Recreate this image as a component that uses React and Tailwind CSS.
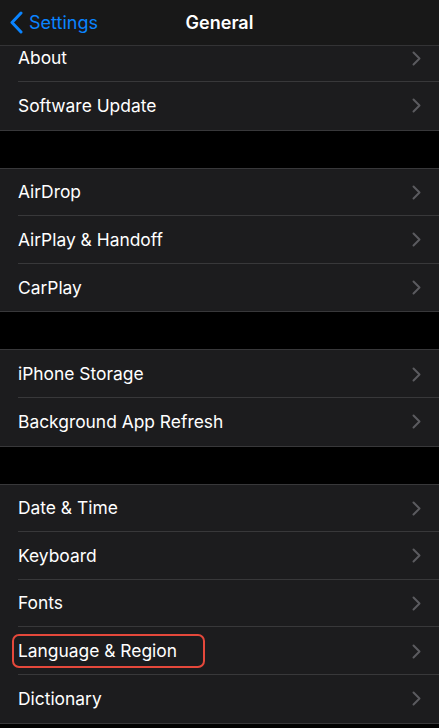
import React from 'react';

const GROUPS = [
  ['About', 'Software Update'],
  ['AirDrop', 'AirPlay & Handoff', 'CarPlay'],
  ['iPhone Storage', 'Background App Refresh'],
  ['Date & Time', 'Keyboard', 'Fonts', 'Language & Region', 'Dictionary'],
];

const Chevron = () => (
  <svg width="9" height="15" viewBox="0 0 9 15" fill="none">
    <path d="M1.5 1.5 L7.5 7.5 L1.5 13.5" stroke="#5b5b5f" strokeWidth="2" strokeLinecap="round" strokeLinejoin="round" />
  </svg>
);

const Row = ({ label, last, highlight }) => (
  <div className="relative h-[47.6px] flex items-center pl-[18px]">
    <span className="flex-1 text-[17.4px] text-white">{label}</span>
    <span className="pr-[18px] flex items-center"><Chevron /></span>
    {!last && <div className="absolute bottom-0 left-[18px] right-0 h-px bg-[#38383a]" />}
    {highlight && (
      <div className="absolute left-[12px] top-[7px] w-[193px] h-[34px] rounded-[7px] border-2 border-[#e5483b]" />
    )}
  </div>
);

const Group = ({ items, first }) => (
  <div className={`bg-[#1c1c1e] border-b border-[#38383a] ${first ? '' : 'border-t'} overflow-hidden`}>
    <div className={first ? '-mt-[11.6px]' : ''}>
      {items.map((label, i) => (
        <Row key={label} label={label} last={i === items.length - 1} highlight={label === 'Language & Region'} />
      ))}
    </div>
  </div>
);

export default function App() {
  return (
    <div className="w-[439px] h-[728px] bg-black overflow-hidden" style={{ fontFamily: 'Inter, "Noto Sans", sans-serif' }}>
      <div className="h-[46px] bg-[#181818] border-b border-[#333335] relative flex items-center">
        <div className="flex items-center pl-[10px] gap-[6px]">
          <svg width="13" height="23" viewBox="0 0 13 23" fill="none">
            <path d="M11 2 L2 11.5 L11 21" stroke="#0a84ff" strokeWidth="3" strokeLinecap="round" strokeLinejoin="round" />
          </svg>
          <span className="text-[18px] text-[#0a84ff]">Settings</span>
        </div>
        <span className="absolute left-0 right-0 text-center text-[18px] font-semibold text-white pointer-events-none">General</span>
      </div>
      <div className="flex flex-col gap-[37px]">
        {GROUPS.map((g, i) => (
          <Group key={i} items={g} first={i === 0} />
        ))}
      </div>
    </div>
  );
}
